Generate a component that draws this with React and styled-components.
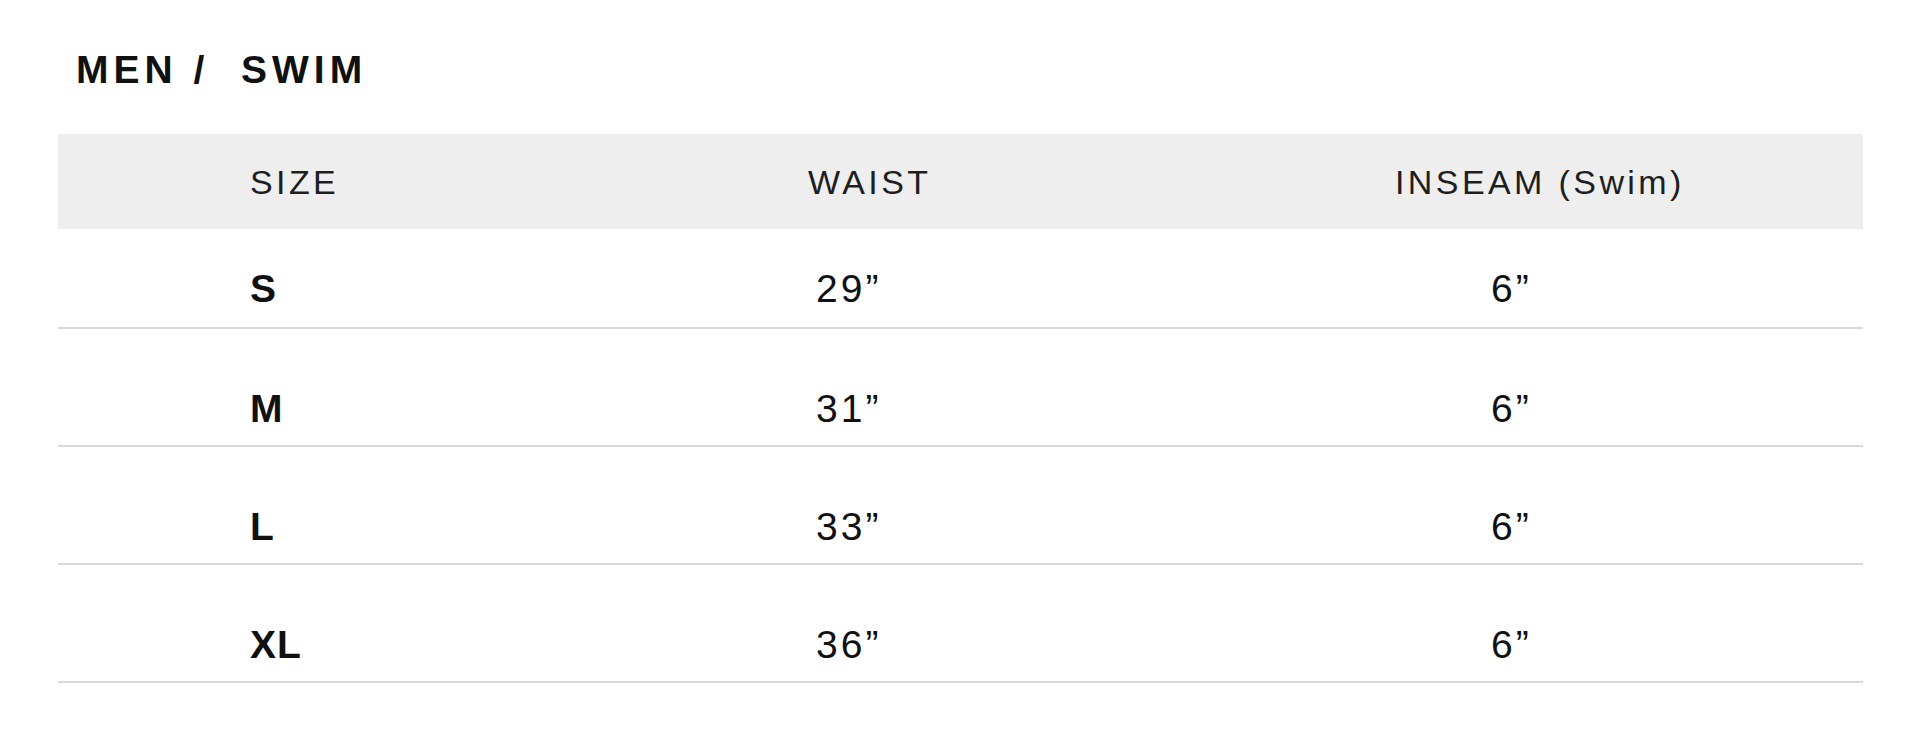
import styled, { createGlobalStyle } from "styled-components";

const GlobalStyle = createGlobalStyle`
  body {
    margin: 0;
    background: #ffffff;
    font-family: "Liberation Sans", Arial, sans-serif;
    color: #111111;
  }
`;

const Page = styled.div`
  padding: 46px 56px 0 58px;
`;

// Page heading
const Title = styled.h1`
  margin: 0 0 40px 18px;
  font-size: 39px;
  line-height: 48px;
  font-weight: 700;
  letter-spacing: 5px;
  white-space: pre;
`;

const Table = styled.div`
  display: flex;
  flex-direction: column;
`;

const HeadRow = styled.div`
  display: grid;
  grid-template-columns: 750px 587px 1fr;
  align-items: center;
  height: 95px;
  background-color: #eeeeee;
`;

const HeadCell = styled.div`
  padding-left: ${(props) => props.indent || 0}px;
  font-size: 34px;
  line-height: 40px;
  letter-spacing: 3.4px;
  color: #1e1e1e;
`;

// size rows, the first one sits closer to the header
const Row = styled.div`
  display: grid;
  grid-template-columns: 750px 587px 1fr;
  padding: ${(props) => (props.first ? "40px 0 18px" : "60px 0 16px")};
  border-bottom: 2px solid #d9d9d9;
`;

const Cell = styled.div`
  padding-left: ${(props) => props.indent || 0}px;
  font-size: 39px;
  line-height: 40px;
  font-weight: ${(props) => (props.bold ? 700 : 400)};
  letter-spacing: ${(props) => (props.bold ? "1px" : "3px")};
  color: #111111;
`;

const sizes = [
  { size: "S", waist: "29\u201D", inseam: "6\u201D" },
  { size: "M", waist: "31\u201D", inseam: "6\u201D" },
  { size: "L", waist: "33\u201D", inseam: "6\u201D" },
  { size: "XL", waist: "36\u201D", inseam: "6\u201D" },
];

const App = () => {
  return (
    <Page>
      <GlobalStyle />
      <Title>{"MEN /\u00A0 SWIM"}</Title>
      <Table>
        <HeadRow>
          <HeadCell indent={192}>SIZE</HeadCell>
          <HeadCell>WAIST</HeadCell>
          <HeadCell>INSEAM (Swim)</HeadCell>
        </HeadRow>
        {sizes.map((item, i) => (
          <Row key={item.size} first={i === 0}>
            <Cell bold indent={192}>{item.size}</Cell>
            <Cell indent={8}>{item.waist}</Cell>
            <Cell indent={96}>{item.inseam}</Cell>
          </Row>
        ))}
      </Table>
    </Page>
  );
};

export default App;
